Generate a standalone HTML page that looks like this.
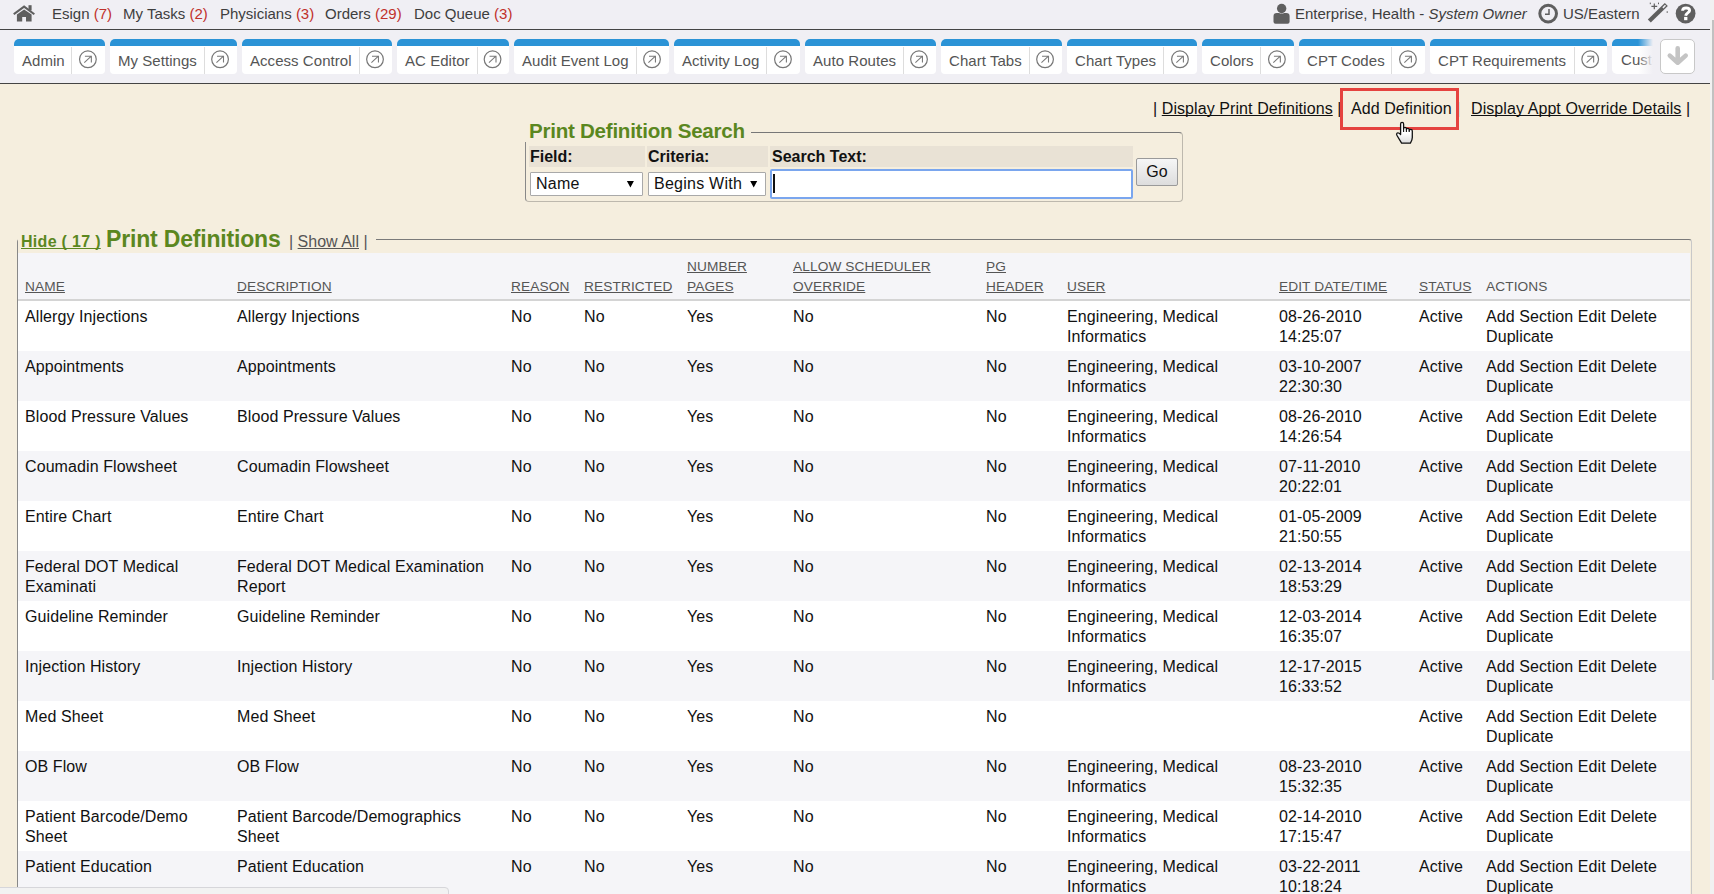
<!DOCTYPE html>
<html><head><meta charset="utf-8"><style>
*{box-sizing:border-box;margin:0;padding:0;text-decoration-skip-ink:none}
html,body{width:1714px;height:894px;overflow:hidden;background:#f5eede;font-family:"Liberation Sans",sans-serif;color:#222}
.abs{position:absolute}
#top{position:absolute;left:0;top:0;width:1710px;height:84px;background:#f0eff4}
#line1{position:absolute;left:0;top:29px;width:1710px;height:1px;background:#444}
#line2{position:absolute;left:0;top:83px;width:1710px;height:1px;background:#444}
#sb{position:absolute;left:1710px;top:0;width:4px;height:894px;background:#f1f1f1}
#sbt{position:absolute;left:1712px;top:20px;width:2px;height:660px;background:#c1c1c1}
.tn{position:absolute;top:4px;font-size:15px;line-height:20px;color:#3e3e3e;white-space:nowrap}
.tn b{font-weight:normal;color:#c0312b}
.tab{position:absolute;top:39px;height:35px;background:#fff;border-radius:5px 5px 4px 4px;overflow:hidden}
.tab .bl{position:absolute;left:0;top:0;right:0;height:7px;background:#2b93d6}
.tab .tx{position:absolute;left:8px;top:13px;font-size:15px;line-height:17px;color:#555;letter-spacing:0.05px;white-space:nowrap}
.tab .dv{position:absolute;top:8px;width:1px;height:27px;background:#ddd}
.tab .ic{position:absolute;top:11px}
#down{position:absolute;left:1660px;top:39px;width:35px;height:35px;background:#fff;border:1px solid #c8c8c8;border-radius:5px}
.lk{position:absolute;top:99px;font-size:16px;line-height:20px;color:#111;letter-spacing:0.08px;white-space:nowrap}
.lk u{color:#111}
#redbox{position:absolute;left:1340px;top:88px;width:119px;height:42px;border:3px solid #e5433f}
#fs1{position:absolute;left:525px;top:132px;width:658px;height:70px;border:1px solid #bdb8ad;border-top-color:#777;border-left-color:#888;border-radius:4px}
#lg1{position:absolute;left:525px;top:120px;padding:0 6px 0 4px;background:#f5eede;font-size:20.6px;letter-spacing:-0.27px;line-height:22px;font-weight:bold;color:#5b871f;white-space:nowrap}
.sh{position:absolute;top:146px;height:21px;background:#e9e2d5;font-size:16px;font-weight:bold;line-height:22px;padding-left:1px;color:#111}
.sel{position:absolute;top:172px;height:24px;background:#fff;border:1px solid #a9a9a9;border-radius:1px;font-size:16px;line-height:22px;padding-left:5px;letter-spacing:0.25px;color:#111;white-space:nowrap}
.sel .ar{position:absolute;top:0;font-size:11px}
#inp{position:absolute;left:770px;top:169px;width:363px;height:30px;background:#fff;border:2px solid #7aa6ee;border-radius:2px}
#caret{position:absolute;left:773px;top:174px;width:1.5px;height:19px;background:#111}
#go{position:absolute;left:1136px;top:158px;width:42px;height:28px;border:1px solid #9a9a9a;border-radius:2px;background:linear-gradient(#f6f6f6,#dddddd);font-size:16px;line-height:26px;text-align:center;color:#111}
#fs2{position:absolute;left:17px;top:239px;width:1675px;height:700px;border:1px solid #888;border-right-color:#c8c8c8;border-top-color:#7a7a7a;border-radius:3px}
#lg2{position:absolute;left:18px;top:226px;height:26px;width:358px;background:#f5eede;white-space:nowrap}
#hide{position:absolute;left:3px;top:7px;font-size:16px;letter-spacing:0.3px;font-weight:bold;color:#5b871f;text-decoration:underline}
#pdt{position:absolute;left:88px;top:0px;font-size:23px;letter-spacing:-0.18px;font-weight:bold;color:#5b871f}
#sa{position:absolute;left:271px;top:7px;font-size:16px;color:#555}
#sa u{color:#555}
#tbl{position:absolute;left:18px;top:253px;width:1672px;border-collapse:collapse;table-layout:fixed}
#tbl th{background:#f5f5f8;font-weight:normal;font-size:13.7px;letter-spacing:0.1px;line-height:20px;color:#555;text-align:left;vertical-align:bottom;padding:4px 0 2px 7px;border-bottom:2px solid #d4d4d4;height:47px}
#tbl th u{color:#555}
#tbl td{font-size:16px;line-height:20px;color:#111;letter-spacing:0.09px;text-align:left;vertical-align:top;padding:6px 0 4px 7px;height:50px}
#tbl tr.g td{background:#f5f5f8}
#tbl tr.w td{background:#fff}
#bot{position:absolute;left:-2px;top:887px;width:451px;height:12px;background:#f2f2f2;border:1px solid #d6d6da;border-radius:0 4px 0 0}
</style></head><body>
<div id="top">
  <div class="tn" style="left:52px">Esign <b>(7)</b></div>
  <div class="tn" style="left:123px">My Tasks <b>(2)</b></div>
  <div class="tn" style="left:220px">Physicians <b>(3)</b></div>
  <div class="tn" style="left:325px">Orders <b>(29)</b></div>
  <div class="tn" style="left:414px">Doc Queue <b>(3)</b></div>
  <div class="tn" style="left:1295px">Enterprise, Health - <i>System Owner</i></div>
  <div class="tn" style="left:1563px">US/Eastern</div>
  <div class="tab" style="left:14px;width:91px"><div class="bl"></div><div class="tx">Admin</div><div class="dv" style="left:57px"></div></div><div class="tab" style="left:110px;width:127px"><div class="bl"></div><div class="tx">My Settings</div><div class="dv" style="left:94px"></div></div><div class="tab" style="left:242px;width:150px"><div class="bl"></div><div class="tx">Access Control</div><div class="dv" style="left:117px"></div></div><div class="tab" style="left:397px;width:112px"><div class="bl"></div><div class="tx">AC Editor</div><div class="dv" style="left:80px"></div></div><div class="tab" style="left:514px;width:155px"><div class="bl"></div><div class="tx">Audit Event Log</div><div class="dv" style="left:122px"></div></div><div class="tab" style="left:674px;width:126px"><div class="bl"></div><div class="tx">Activity Log</div><div class="dv" style="left:92px"></div></div><div class="tab" style="left:805px;width:131px"><div class="bl"></div><div class="tx">Auto Routes</div><div class="dv" style="left:98px"></div></div><div class="tab" style="left:941px;width:121px"><div class="bl"></div><div class="tx">Chart Tabs</div><div class="dv" style="left:88px"></div></div><div class="tab" style="left:1067px;width:130px"><div class="bl"></div><div class="tx">Chart Types</div><div class="dv" style="left:96px"></div></div><div class="tab" style="left:1202px;width:92px"><div class="bl"></div><div class="tx">Colors</div><div class="dv" style="left:58px"></div></div><div class="tab" style="left:1299px;width:126px"><div class="bl"></div><div class="tx">CPT Codes</div><div class="dv" style="left:92px"></div></div><div class="tab" style="left:1430px;width:177px"><div class="bl"></div><div class="tx">CPT Requirements</div><div class="dv" style="left:144px"></div></div><div class="tab" style="left:1612px;width:43px;border-radius:5px 0 0 5px"><div class="bl"></div><div class="tx" style="left:9px;top:12px">Custom</div></div><div class="abs" style="left:1638px;top:36px;width:20px;height:40px;background:linear-gradient(90deg,rgba(240,239,244,0),#f0eff4 75%)"></div><div id="down"></div>
</div>
<svg class="abs" style="left:0;top:0;z-index:5;pointer-events:none" width="1714" height="894" viewBox="0 0 1714 894">
<g fill="#5f5f5f" stroke="none">
 <path d="M14.6 13.6 L24.1 6.6 L33.5 13.6" fill="none" stroke="#5f5f5f" stroke-width="2.1" stroke-linecap="square"/>
 <rect x="28.5" y="5.2" width="3.1" height="5.2"/>
 <path d="M16.9 14.6 L24.1 9.4 L31.6 14.6 V21.6 H26 V16.9 H22.2 V21.6 H16.9 Z"/>
 <circle cx="1281.65" cy="8.45" r="4.7"/>
 <path d="M1273.5 21.8 V16.3 Q1273.5 13 1276.8 13 H1279 Q1281.6 14.2 1284.3 13 H1286.3 Q1289.6 13 1289.6 16.3 V21.8 Q1289.6 23.8 1287.6 23.8 H1275.5 Q1273.5 23.8 1273.5 21.8 Z"/>
 <circle cx="1548.15" cy="13.6" r="8.35" fill="none" stroke="#5f5f5f" stroke-width="3"/>
 <path d="M1549 9 V14.3 H1545" fill="none" stroke="#5f5f5f" stroke-width="1.5"/>
 <path d="M1649.3 21 L1666.3 4.5" stroke="#5f5f5f" stroke-width="4.3"/>
 <path d="M1662.9 7.9 L1665.5 5.3" stroke="#f0eff4" stroke-width="1.5"/>
 <path d="M1654.3 3.4 V9.2 M1651.4 6.3 H1657.2" stroke="#5f5f5f" stroke-width="1.2"/>
 <rect x="1649.8" y="2.6" width="1" height="1.6"/><rect x="1658" y="2.6" width="1" height="1.6"/><rect x="1666.6" y="11.4" width="1.3" height="1.3"/>
 <circle cx="1685.6" cy="13.6" r="9.9"/>
 <path d="M1682.6 10.8 C1682.6 8.6 1684.2 8 1686.2 8 C1688.4 8 1689.6 9 1689.6 10.5 C1689.6 12.6 1686.3 12.6 1685.6 15.8" fill="none" stroke="#fff" stroke-width="2.9"/>
 <rect x="1684.1" y="16.9" width="3.3" height="3.3" fill="#fff"/>
 <path d="M1677.7 48.2 V61 M1669.8 55.6 L1677.7 62.7 L1685.7 55.6" fill="none" stroke="#c4c4c4" stroke-width="4.6" stroke-linecap="round" stroke-linejoin="round"/>
</g>
<path d="M626.9 181.1 H633.9 L630.4 187.6 Z M750.2 181.1 H757.2 L753.7 187.6 Z" fill="#000"/>
<g transform="translate(87.90,59.3)"><circle r="8.35" fill="none" stroke="#777" stroke-width="1.2"/><path d="M-3.6 3.3 L3.1 -2.95 M-3.0 -3.0 H3.45 V3.3" fill="none" stroke="#7a7a7a" stroke-width="1.1"/></g><g transform="translate(220.05,59.3)"><circle r="8.35" fill="none" stroke="#777" stroke-width="1.2"/><path d="M-3.6 3.3 L3.1 -2.95 M-3.0 -3.0 H3.45 V3.3" fill="none" stroke="#7a7a7a" stroke-width="1.1"/></g><g transform="translate(375.00,59.3)"><circle r="8.35" fill="none" stroke="#777" stroke-width="1.2"/><path d="M-3.6 3.3 L3.1 -2.95 M-3.0 -3.0 H3.45 V3.3" fill="none" stroke="#7a7a7a" stroke-width="1.1"/></g><g transform="translate(492.55,59.3)"><circle r="8.35" fill="none" stroke="#777" stroke-width="1.2"/><path d="M-3.6 3.3 L3.1 -2.95 M-3.0 -3.0 H3.45 V3.3" fill="none" stroke="#7a7a7a" stroke-width="1.1"/></g><g transform="translate(652.00,59.3)"><circle r="8.35" fill="none" stroke="#777" stroke-width="1.2"/><path d="M-3.6 3.3 L3.1 -2.95 M-3.0 -3.0 H3.45 V3.3" fill="none" stroke="#7a7a7a" stroke-width="1.1"/></g><g transform="translate(782.95,59.3)"><circle r="8.35" fill="none" stroke="#777" stroke-width="1.2"/><path d="M-3.6 3.3 L3.1 -2.95 M-3.0 -3.0 H3.45 V3.3" fill="none" stroke="#7a7a7a" stroke-width="1.1"/></g><g transform="translate(919.00,59.3)"><circle r="8.35" fill="none" stroke="#777" stroke-width="1.2"/><path d="M-3.6 3.3 L3.1 -2.95 M-3.0 -3.0 H3.45 V3.3" fill="none" stroke="#7a7a7a" stroke-width="1.1"/></g><g transform="translate(1045.05,59.3)"><circle r="8.35" fill="none" stroke="#777" stroke-width="1.2"/><path d="M-3.6 3.3 L3.1 -2.95 M-3.0 -3.0 H3.45 V3.3" fill="none" stroke="#7a7a7a" stroke-width="1.1"/></g><g transform="translate(1179.95,59.3)"><circle r="8.35" fill="none" stroke="#777" stroke-width="1.2"/><path d="M-3.6 3.3 L3.1 -2.95 M-3.0 -3.0 H3.45 V3.3" fill="none" stroke="#7a7a7a" stroke-width="1.1"/></g><g transform="translate(1276.90,59.3)"><circle r="8.35" fill="none" stroke="#777" stroke-width="1.2"/><path d="M-3.6 3.3 L3.1 -2.95 M-3.0 -3.0 H3.45 V3.3" fill="none" stroke="#7a7a7a" stroke-width="1.1"/></g><g transform="translate(1407.95,59.3)"><circle r="8.35" fill="none" stroke="#777" stroke-width="1.2"/><path d="M-3.6 3.3 L3.1 -2.95 M-3.0 -3.0 H3.45 V3.3" fill="none" stroke="#7a7a7a" stroke-width="1.1"/></g><g transform="translate(1590.20,59.3)"><circle r="8.35" fill="none" stroke="#777" stroke-width="1.2"/><path d="M-3.6 3.3 L3.1 -2.95 M-3.0 -3.0 H3.45 V3.3" fill="none" stroke="#7a7a7a" stroke-width="1.1"/></g>
</svg>
<div id="line1"></div>
<div id="line2"></div>

<div class="lk" style="left:1153px">| <u>Display Print Definitions</u> |</div>
<div class="lk" style="left:1351px">Add Definition</div>
<div class="lk" style="left:1456px">|</div><div class="lk" style="left:1471px"><u>Display Appt Override Details</u> |</div>
<div id="redbox"></div>
<svg class="abs" style="left:0;top:0;z-index:6" width="1714" height="160" viewBox="0 0 1714 160">
  <defs><linearGradient id="hg" x1="0" y1="0" x2="0" y2="1"><stop offset="0.5" stop-color="#fff"/><stop offset="1" stop-color="#dcdcdc"/></linearGradient></defs>
  <path d="M1400.6 134.5 V124 Q1400.6 122.4 1402.1 122.4 Q1403.6 122.4 1403.6 124 V128.8 Q1403.6 127.4 1405 127.4 Q1406.4 127.4 1406.4 128.8 V129.8 Q1406.4 128.4 1407.8 128.4 Q1409.2 128.4 1409.2 129.8 V130.8 Q1409.2 129.4 1410.7 129.4 Q1412.3 129.4 1412.3 131 V137.5 Q1412.3 140 1410.4 143.2 H1401.6 L1397 135.5 Q1396 133.8 1397.2 133 Q1398.6 132.2 1400.6 134.5 Z" fill="url(#hg)" stroke="#111" stroke-width="1.3" stroke-linejoin="round"/>
  <path d="M1403.6 128.8 V132 M1406.4 129.8 V132 M1409.2 130.8 V132" stroke="#111" stroke-width="1.1"/>
</svg>

<div id="fs1"></div>
<div id="lg1">Print Definition Search</div>
<div class="sh" style="left:529px;width:116px">Field:</div>
<div class="sh" style="left:647px;width:121px">Criteria:</div>
<div class="sh" style="left:770px;width:363px;padding-left:2px">Search Text:</div>
<div class="sel" style="left:530px;width:113px">Name</div>
<div class="sel" style="left:648px;width:118px">Begins With</div>
<div id="inp"></div><div id="caret"></div>
<div id="go">Go</div>

<div id="fs2"></div>
<div id="lg2"><span id="hide">Hide ( 17 )</span><span id="pdt">Print Definitions</span><span id="sa">| <u>Show All</u> |</span></div>
<table id="tbl"><colgroup><col style="width:212px"><col style="width:274px"><col style="width:73px"><col style="width:103px"><col style="width:106px"><col style="width:193px"><col style="width:81px"><col style="width:212px"><col style="width:140px"><col style="width:67px"><col style="width:211px"></colgroup><tr><th><u>NAME</u></th><th><u>DESCRIPTION</u></th><th><u>REASON</u></th><th><u>RESTRICTED</u></th><th><u>NUMBER</u><br><u>PAGES</u></th><th><u>ALLOW SCHEDULER</u><br><u>OVERRIDE</u></th><th><u>PG</u><br><u>HEADER</u></th><th><u>USER</u></th><th><u>EDIT DATE/TIME</u></th><th><u>STATUS</u></th><th>ACTIONS</th></tr><tr class="w"><td>Allergy Injections</td><td>Allergy Injections</td><td>No</td><td>No</td><td>Yes</td><td>No</td><td>No</td><td>Engineering, Medical<br>Informatics</td><td>08-26-2010<br>14:25:07</td><td>Active</td><td>Add Section Edit Delete<br>Duplicate</td></tr><tr class="g"><td>Appointments</td><td>Appointments</td><td>No</td><td>No</td><td>Yes</td><td>No</td><td>No</td><td>Engineering, Medical<br>Informatics</td><td>03-10-2007<br>22:30:30</td><td>Active</td><td>Add Section Edit Delete<br>Duplicate</td></tr><tr class="w"><td>Blood Pressure Values</td><td>Blood Pressure Values</td><td>No</td><td>No</td><td>Yes</td><td>No</td><td>No</td><td>Engineering, Medical<br>Informatics</td><td>08-26-2010<br>14:26:54</td><td>Active</td><td>Add Section Edit Delete<br>Duplicate</td></tr><tr class="g"><td>Coumadin Flowsheet</td><td>Coumadin Flowsheet</td><td>No</td><td>No</td><td>Yes</td><td>No</td><td>No</td><td>Engineering, Medical<br>Informatics</td><td>07-11-2010<br>20:22:01</td><td>Active</td><td>Add Section Edit Delete<br>Duplicate</td></tr><tr class="w"><td>Entire Chart</td><td>Entire Chart</td><td>No</td><td>No</td><td>Yes</td><td>No</td><td>No</td><td>Engineering, Medical<br>Informatics</td><td>01-05-2009<br>21:50:55</td><td>Active</td><td>Add Section Edit Delete<br>Duplicate</td></tr><tr class="g"><td>Federal DOT Medical<br>Examinati</td><td>Federal DOT Medical Examination<br>Report</td><td>No</td><td>No</td><td>Yes</td><td>No</td><td>No</td><td>Engineering, Medical<br>Informatics</td><td>02-13-2014<br>18:53:29</td><td>Active</td><td>Add Section Edit Delete<br>Duplicate</td></tr><tr class="w"><td>Guideline Reminder</td><td>Guideline Reminder</td><td>No</td><td>No</td><td>Yes</td><td>No</td><td>No</td><td>Engineering, Medical<br>Informatics</td><td>12-03-2014<br>16:35:07</td><td>Active</td><td>Add Section Edit Delete<br>Duplicate</td></tr><tr class="g"><td>Injection History</td><td>Injection History</td><td>No</td><td>No</td><td>Yes</td><td>No</td><td>No</td><td>Engineering, Medical<br>Informatics</td><td>12-17-2015<br>16:33:52</td><td>Active</td><td>Add Section Edit Delete<br>Duplicate</td></tr><tr class="w"><td>Med Sheet</td><td>Med Sheet</td><td>No</td><td>No</td><td>Yes</td><td>No</td><td>No</td><td></td><td></td><td>Active</td><td>Add Section Edit Delete<br>Duplicate</td></tr><tr class="g"><td>OB Flow</td><td>OB Flow</td><td>No</td><td>No</td><td>Yes</td><td>No</td><td>No</td><td>Engineering, Medical<br>Informatics</td><td>08-23-2010<br>15:32:35</td><td>Active</td><td>Add Section Edit Delete<br>Duplicate</td></tr><tr class="w"><td>Patient Barcode/Demo<br>Sheet</td><td>Patient Barcode/Demographics<br>Sheet</td><td>No</td><td>No</td><td>Yes</td><td>No</td><td>No</td><td>Engineering, Medical<br>Informatics</td><td>02-14-2010<br>17:15:47</td><td>Active</td><td>Add Section Edit Delete<br>Duplicate</td></tr><tr class="g"><td>Patient Education</td><td>Patient Education</td><td>No</td><td>No</td><td>Yes</td><td>No</td><td>No</td><td>Engineering, Medical<br>Informatics</td><td>03-22-2011<br>10:18:24</td><td>Active</td><td>Add Section Edit Delete<br>Duplicate</td></tr><tr class="w"><td>Patient Summary</td><td>Patient Summary</td><td>No</td><td>No</td><td>Yes</td><td>No</td><td>No</td><td>Engineering, Medical<br>Informatics</td><td>03-22-2011<br>10:18:24</td><td>Active</td><td>Add Section Edit Delete<br>Duplicate</td></tr></table>
<div id="bot"></div>
<div id="sb"></div><div id="sbt"></div>
</body></html>
